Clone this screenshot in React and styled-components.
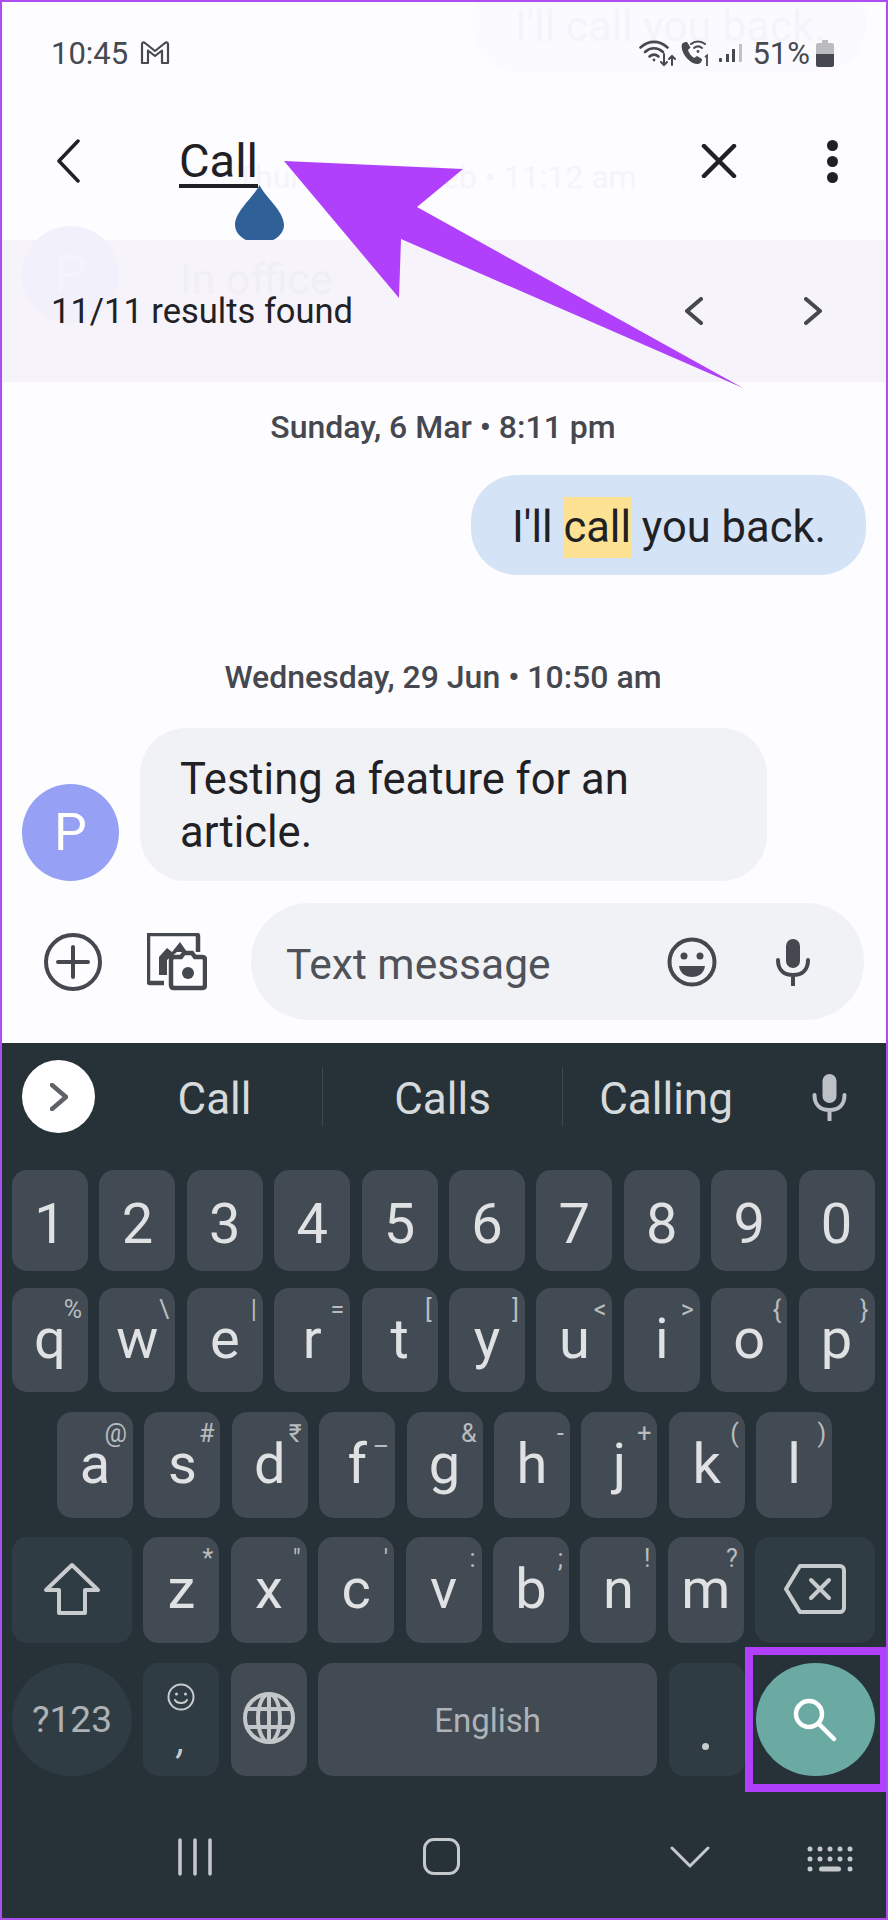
import React from 'react';
import styled, { createGlobalStyle } from 'styled-components';

const GlobalStyle = createGlobalStyle`
  html, body { margin: 0; padding: 0; background: #fdfcff; }
  * { box-sizing: border-box; }
`;

const row2 = [['q', '%'], ['w', '\\'], ['e', '|'], ['r', '='], ['t', '['], ['y', ']'], ['u', '<'], ['i', '>'], ['o', '{'], ['p', '}']];
const row3 = [['a', '@'], ['s', '#'], ['d', '₹'], ['f', '–', true], ['g', '&'], ['h', '-'], ['j', '+'], ['k', '('], ['l', ')']];
const row4 = [['z', '*'], ['x', '"'], ['c', "'"], ['v', ':'], ['b', ';'], ['n', '!'], ['m', '?']];

const WifiIcon = () => (
  <svg width="38" height="28" viewBox="0 0 38 28" fill="none" stroke="#46494f" strokeWidth="2.6" strokeLinecap="round">
    <path d="M1.5 8.5C10 1 20 1 28.5 8.5" />
    <path d="M6 13C11.5 8 18.5 8 24 13" />
    <path d="M10.5 17.5C13.5 15 16.5 15 19.5 17.5" />
    <circle cx="15" cy="21" r="1.4" fill="#46494f" stroke="none" />
    <path d="M25 15V26M22 23L25 26L28 23" strokeWidth="2" />
    <path d="M33 26V17M30 20L33 17L36 20" strokeWidth="2" />
  </svg>
);

const CallWifiIcon = () => (
  <svg width="31" height="28" viewBox="0 0 31 28" fill="none">
    <path d="M3 5C1 12 9 24 18 25C21 25 23 23 23 20L18 17L15 19C12 17 10 14 9 11L11.500 8.500L8 3C6 3 4 3.500 3 5Z" fill="#46494f" />
    <path d="M12 5C16 1.500 22 1.500 26 5M15 9C17.500 7 20.500 7 23 9" stroke="#46494f" strokeWidth="2" strokeLinecap="round" />
    <circle cx="19" cy="12.500" r="1.400" fill="#46494f" />
    <path d="M26 18L28 16.500V27" stroke="#46494f" strokeWidth="1.800" />
  </svg>
);

const SignalIcon = () => (
  <svg width="24" height="19" viewBox="0 0 24 19">
    <rect x="0" y="14" width="3" height="4" rx="1" fill="#46494f" />
    <rect x="7" y="10" width="3" height="8" fill="#46494f" />
    <rect x="13" y="5" width="3" height="13" fill="#46494f" />
    <rect x="20" y="0" width="3" height="18" fill="#bfc1c4" />
  </svg>
);

const BatteryIcon = () => (
  <svg width="18" height="27" viewBox="0 0 18 27">
    <path d="M6 0H12V3H16C17 3 18 4 18 5V14H0V5C0 4 1 3 2 3H6Z" fill="#b9bbbf" />
    <path d="M0 14H18V25C18 26 17 27 16 27H2C1 27 0 26 0 25Z" fill="#45484f" />
  </svg>
);

const GmailIcon = () => (
  <svg width="30" height="24" viewBox="0 0 30 24" fill="none" stroke="#46494f" strokeWidth="2.200" strokeLinejoin="round">
    <path d="M2 22V3C2 1.500 3.500 1 5 2L15 10L25 2C26.500 1 28 1.500 28 3V22H22V9.500L15 15L8 9.500V22Z" />
  </svg>
);

const Chevron = ({ dir = 'left', w = 22, h = 44, sw = 4, color = '#1f2125' }) => (
  <svg width={w} height={h} viewBox={`0 0 ${w} ${h}`} fill="none" stroke={color} strokeWidth={sw} strokeLinecap="round" strokeLinejoin="round">
    {dir === 'left'
      ? <path d={`M${w - 2} 2L2 ${h / 2}L${w - 2} ${h - 2}`} />
      : <path d={`M2 2L${w - 2} ${h / 2}L2 ${h - 2}`} />}
  </svg>
);

const CloseIcon = () => (
  <svg width="36" height="34" viewBox="0 0 36 34" stroke="#1f2125" strokeWidth="4.500" strokeLinecap="round">
    <path d="M3 2L33 32M33 2L3 32" />
  </svg>
);

const PlusIcon = () => (
  <svg width="58" height="58" viewBox="0 0 58 58" fill="none" stroke="#45484f" strokeWidth="4">
    <circle cx="29" cy="29" r="27" />
    <path d="M14 29H44M29 14V44" strokeLinecap="round" />
  </svg>
);

const GalleryIcon = () => (
  <svg width="60" height="58" viewBox="0 0 60 58" fill="none">
    <path d="M17 50H3C2 50 1 49 1 48V3C1 2 2 1 3 1H49C50 1 51 2 51 3V19" stroke="#45484f" strokeWidth="4.500" />
    <path d="M12 42V24L20 15L25 19L33 9L40 19H30L20 27V42Z" fill="#45484f" />
    <path d="M27 24H34L37 20H45L48 24H55C57 24 58 25 58 27V52C58 54 57 55 55 55H27C25 55 24 54 24 52V27C24 25 25 24 27 24Z" fill="#fdfcff" stroke="#45484f" strokeWidth="4.500" />
    <circle cx="41" cy="40" r="6" fill="#45484f" />
  </svg>
);

const SmileIcon = () => (
  <svg width="50" height="50" viewBox="0 0 50 50" fill="none">
    <circle cx="25" cy="25" r="22.500" stroke="#45484f" strokeWidth="4" />
    <circle cx="17" cy="19" r="3.500" fill="#45484f" />
    <circle cx="33" cy="19" r="3.500" fill="#45484f" />
    <path d="M12 29H38C37 36 32 40 25 40C18 40 13 36 12 29Z" fill="#45484f" />
  </svg>
);

const MicIcon = ({ color = '#45484f', w = 34, h = 48 }) => (
  <svg width={w} height={h} viewBox="0 0 34 48" fill="none">
    <rect x="10" y="1" width="14" height="29" rx="7" fill={color} />
    <path d="M2 22C2 32 8 37 17 37C26 37 32 32 32 22M17 37V47" stroke={color} strokeWidth="4" strokeLinecap="round" />
  </svg>
);

const ShiftIcon = () => (
  <svg width="58" height="54" viewBox="0 0 58 54" fill="none" stroke="#c9ccce" strokeWidth="4" strokeLinejoin="round">
    <path d="M29 3L55 28L44 28H42V51H16V28H3Z" />
  </svg>
);

const BackspaceIcon = () => (
  <svg width="62" height="50" viewBox="0 0 62 50" fill="none" stroke="#c9ccce" strokeWidth="4" strokeLinejoin="round">
    <path d="M16 2H56C58 2 60 4 60 6V44C60 46 58 48 56 48H16L2 25Z" />
    <path d="M27 16L45 34M45 16L27 34" strokeLinecap="round" />
  </svg>
);

const KeySmile = () => (
  <svg width="28" height="28" viewBox="0 0 28 28" fill="none" stroke="#c9ccce" strokeWidth="2">
    <circle cx="14" cy="14" r="12.500" />
    <circle cx="9.500" cy="11" r="1.500" fill="#c9ccce" stroke="none" />
    <circle cx="18.500" cy="11" r="1.500" fill="#c9ccce" stroke="none" />
    <path d="M8 17C10 21 18 21 20 17" strokeLinecap="round" />
  </svg>
);

const GlobeIcon = () => (
  <svg width="52" height="52" viewBox="0 0 52 52" fill="none" stroke="#c4c7c9" strokeWidth="4">
    <circle cx="26" cy="26" r="24" />
    <ellipse cx="26" cy="26" rx="11" ry="24" />
    <path d="M26 2V50M4 17H48M4 35H48" />
  </svg>
);

const SearchIcon = () => (
  <svg width="44" height="44" viewBox="0 0 44 44" fill="none" stroke="#ffffff" strokeWidth="4.500" strokeLinecap="round">
    <circle cx="16" cy="16" r="13" />
    <path d="M26 26L41 41" />
  </svg>
);

const NavLinesIcon = () => (
  <svg width="36" height="38" viewBox="0 0 36 38" stroke="#c6c9cb" strokeWidth="3.500" strokeLinecap="round">
    <path d="M3 2V36M18 2V36M33 2V36" />
  </svg>
);

const NavKeyboard = styled.svg`
  width: 46px;
  height: 26px;
  margin: 8px 0 0 97px;
`;

const NavKeyboardIcon = () => (
  <NavKeyboard viewBox="0 0 46 26" fill="#c6c9cb">
    {[0, 1].map((r) =>
      [0, 1, 2, 3, 4].map((c) => <circle key={`${r}-${c}`} cx={3 + c * 10} cy={3 + r * 10} r="2.500" />)
    )}
    <circle cx="3" cy="23" r="2.500" />
    <rect x="12" y="20.500" width="22" height="5" rx="2.500" />
    <circle cx="43" cy="23" r="2.500" />
  </NavKeyboard>
);

const App = () => (
  <Page>
    <GlobalStyle />
    <GhostBubble />
    <GhostText $x={513} $y={-1} $size={43}>I'll call you back.</GhostText>
    <GhostText $x={234} $y={156} $size={32}>Thursday, 24 Feb • 11:12 am</GhostText>

    <StatusBar>
      <StatusLeft>
        <Time>10:45</Time>
        <GmailIcon />
      </StatusLeft>
      <StatusRight>
        <WifiIcon />
        <CallWifiIcon />
        <SignalIcon />
        <Battery>51%</Battery>
        <BatteryIcon />
      </StatusRight>
    </StatusBar>

    <Header>
      <Chevron w={23} h={44} sw={3.5} />
      <SearchField>
        <Query>Call</Query>
        <Drop viewBox="0 0 49 58">
          <path d="M24.500 0C30 12 49 26 49 40C49 50 38 58 24.500 58C11 58 0 50 0 40C0 26 19 12 24.500 0Z" fill="#2f6098" />
        </Drop>
      </SearchField>
      <HeaderRight>
        <CloseIcon />
        <Dots><i /><i /><i /></Dots>
      </HeaderRight>
    </Header>

    <ResultsBand>
      <GhostAvatar>P</GhostAvatar>
      <GhostOffice>In office</GhostOffice>
      <Results>11/11 results found</Results>
      <ResultNav>
        <Chevron w={18} h={28} sw={4} color="#45484f" />
        <Chevron dir="right" w={18} h={28} sw={4} color="#45484f" />
      </ResultNav>
    </ResultsBand>

    <Thread>
      <DateLine>Sunday, 6 Mar • 8:11 pm</DateLine>
      <SentBubble>I'll <Hit>call</Hit> you back.</SentBubble>
      <DateLine $top={85}>Wednesday, 29 Jun • 10:50 am</DateLine>
      <ReceivedRow>
        <Avatar>P</Avatar>
        <ReceivedBubble>Testing a feature for an article.</ReceivedBubble>
      </ReceivedRow>
    </Thread>

    <Composer>
      <PlusIcon />
      <GalleryIcon />
      <InputPill>
        <Placeholder>Text message</Placeholder>
        <SmileIcon />
        <MicIcon />
      </InputPill>
    </Composer>

    <Keyboard>
      <Suggestions>
        <ExpandButton>
          <Chevron dir="right" w={18} h={28} sw={4.5} color="#5f6368" />
        </ExpandButton>
        <Suggestion $w={227} $shift={12}>Call</Suggestion>
        <Divider />
        <Suggestion $w={239}>Calls</Suggestion>
        <Divider />
        <Suggestion $w={206}>Calling</Suggestion>
        <SuggestMic><MicIcon color="#bdc1c6" w={35} h={48} /></SuggestMic>
      </Suggestions>

      <KeyRow $h={101} $top={37}>
        {['1', '2', '3', '4', '5', '6', '7', '8', '9', '0'].map((d) => <DigitKey key={d}>{d}</DigitKey>)}
      </KeyRow>
      <KeyRow $h={104} $top={17}>
        {row2.map(([l, s]) => <Key key={l}>{l}<Sup>{s}</Sup></Key>)}
      </KeyRow>
      <KeyRow $h={106} $top={20} $left={55}>
        {row3.map(([l, s, low]) => <Key key={l}>{l}<Sup $low={low}>{s}</Sup></Key>)}
      </KeyRow>
      <KeyRow $h={106} $top={19}>
        <Key $w={120} $dark><ShiftIcon /></Key>
        {row4.map(([l, s]) => <Key key={l}>{l}<Sup>{s}</Sup></Key>)}
        <Key $w={120} $dark><BackspaceIcon /></Key>
      </KeyRow>
      <KeyRow $h={113} $top={20}>
        <RoundKey $w={120} $bg="#303c44"><SymbolsLabel>?123</SymbolsLabel></RoundKey>
        <CommaKey $dark>
          <KeySmile />
          <Comma>,</Comma>
        </CommaKey>
        <Key><GlobeIcon /></Key>
        <Key $w={339}><SpaceLabel>English</SpaceLabel></Key>
        <Key $dark><PeriodDot /></Key>
        <RoundKey $w={119} $bg="#6ba9a3"><SearchIcon /></RoundKey>
      </KeyRow>

      <NavBar>
        <NavLinesIcon />
        <NavHome />
        <NavChevron viewBox="0 0 40 22" fill="none" stroke="#c6c9cb" strokeWidth="3" strokeLinecap="round" strokeLinejoin="round">
          <path d="M2 2L20 20L38 2" />
        </NavChevron>
        <NavKeyboardIcon />
      </NavBar>
    </Keyboard>

    <SearchHighlight />
    <CalloutArrow viewBox="0 0 888 400">
      <path d="M284 161L463 169L417 207L743 388L401 239L399 298Z" fill="#b040fb" />
    </CalloutArrow>
  </Page>
);

export default App;

const sans = `Roboto, "Noto Sans", sans-serif`;

const Page = styled.div`
  position: relative;
  width: 888px;
  height: 1920px;
  overflow: hidden;
  display: flex;
  flex-direction: column;
  border: 2px solid #ad4ff0;
  background: #fdfcff;
  font-family: ${sans};
`;

const GhostBubble = styled.div`
  position: absolute;
  left: 471px;
  top: -30px;
  width: 393px;
  height: 100px;
  border-radius: 46px;
  background: #fbfaff;
`;

const GhostText = styled.div`
  position: absolute;
  left: ${(p) => p.$x}px;
  top: ${(p) => p.$y}px;
  font-size: ${(p) => p.$size}px;
  color: #f6f4fa;
  white-space: nowrap;
`;

const StatusBar = styled.div`
  position: relative;
  height: 102px;
  flex: none;
  display: flex;
  align-items: center;
  justify-content: space-between;
  padding: 0 52px 0 49px;
  color: #46494f;
`;

const StatusLeft = styled.div`
  display: flex;
  align-items: center;
  gap: 12px;
`;

const Time = styled.span`
  font-size: 31px;
`;

const StatusRight = styled.div`
  display: flex;
  align-items: center;
  gap: 4px;
  svg:nth-child(2) { margin-left: -2px; }
  svg:nth-child(3) { margin-left: 5px; }
`;

const Battery = styled.span`
  font-size: 31px;
  margin: 0 2px 0 5px;
`;

const Header = styled.div`
  position: relative;
  height: 114px;
  flex: none;
  display: flex;
  align-items: center;
  padding: 0 48px 0 55px;
`;

const SearchField = styled.div`
  position: relative;
  margin-left: 99px;
  flex: 1;
  padding-top: 2px;
`;

const Query = styled.span`
  display: inline-block;
  font-size: 47px;
  line-height: 47px;
  color: #1f2125;
  border-bottom: 4px solid #1f2125;
`;

const Drop = styled.svg`
  position: absolute;
  left: 56px;
  top: 50px;
  width: 49px;
  height: 58px;
`;

const HeaderRight = styled.div`
  display: flex;
  align-items: center;
  gap: 90px;
`;

const Dots = styled.div`
  display: flex;
  flex-direction: column;
  gap: 5px;
  i {
    display: block;
    width: 11px;
    height: 11px;
    border-radius: 50%;
    background: #1f2125;
  }
`;

const ResultsBand = styled.div`
  position: relative;
  height: 142px;
  margin-top: 22px;
  flex: none;
  display: flex;
  align-items: center;
  justify-content: space-between;
  padding: 0 64px 0 49px;
  background: #f6f3fb;
`;

const GhostAvatar = styled.div`
  position: absolute;
  left: 20px;
  top: -14px;
  width: 97px;
  height: 97px;
  border-radius: 50%;
  background: #f2f0fa;
  color: #f6f3fb;
  font-size: 52px;
  display: flex;
  align-items: center;
  justify-content: center;
`;

const GhostOffice = styled.div`
  position: absolute;
  left: 178px;
  top: 14px;
  font-size: 43px;
  color: #f1eff6;
`;

const Results = styled.div`
  position: relative;
  font-size: 34.500px;
  color: #1f2125;
`;

const ResultNav = styled.div`
  position: relative;
  display: flex;
  gap: 101px;
`;

const Thread = styled.div`
  flex: none;
  display: flex;
  flex-direction: column;
  padding: 28px 20px 0;
`;

const DateLine = styled.div`
  margin-top: ${(p) => p.$top || 0}px;
  text-align: center;
  font-size: 32px;
  line-height: 34px;
  font-weight: 500;
  color: #46484f;
  padding-right: 2px;
`;

const SentBubble = styled.div`
  align-self: flex-end;
  margin: 31px 0 0 0;
  height: 100px;
  padding: 4px 40px 0 41px;
  border-radius: 46px;
  background: #d5e3f7;
  font-size: 43.500px;
  line-height: 97px;
  color: #1f2125;
  white-space: pre;
`;

const Hit = styled.span`
  display: inline-block;
  line-height: 61px;
  background: #fde293;
`;

const ReceivedRow = styled.div`
  display: flex;
  align-items: flex-end;
  gap: 21px;
  margin-top: 34px;
`;

const Avatar = styled.div`
  width: 97px;
  height: 97px;
  border-radius: 50%;
  background: #96a0f5;
  color: #ffffff;
  font-size: 52px;
  display: flex;
  align-items: center;
  justify-content: center;
`;

const ReceivedBubble = styled.div`
  width: 627px;
  height: 153px;
  padding: 25px 120px 0 40px;
  border-radius: 46px;
  background: #f1f2f6;
  font-size: 43.500px;
  line-height: 53px;
  color: #1f2125;
`;

const Composer = styled.div`
  flex: none;
  display: flex;
  align-items: center;
  gap: 45px;
  margin-top: 22px;
  height: 117px;
  padding: 0 22px 0 42px;
`;

const InputPill = styled.div`
  flex: 1;
  height: 117px;
  margin-left: -1px;
  display: flex;
  align-items: center;
  padding: 0 54px 0 35px;
  border-radius: 58px;
  background: #f1f2f6;
  svg:last-child { margin-left: 59px; }
`;

const Placeholder = styled.div`
  flex: 1;
  padding-top: 6px;
  font-size: 42.500px;
  color: #4f5259;
`;

const Keyboard = styled.div`
  flex: 1;
  margin-top: 23px;
  display: flex;
  flex-direction: column;
  background: #263238;
  padding-top: 17px;
`;

const Suggestions = styled.div`
  height: 73px;
  flex: none;
  display: flex;
  align-items: center;
  padding-left: 20px;
`;

const ExpandButton = styled.div`
  width: 73px;
  height: 73px;
  flex: none;
  border-radius: 50%;
  background: #ffffff;
  display: flex;
  align-items: center;
  justify-content: center;
`;

const Suggestion = styled.div`
  width: ${(p) => p.$w}px;
  flex: none;
  padding: 4px 0 0 ${(p) => p.$shift || 0}px;
  text-align: center;
  font-size: 44px;
  color: #d7dadc;
`;

const Divider = styled.div`
  width: 1px;
  height: 59px;
  flex: none;
  background: #3c474e;
`;

const SuggestMic = styled.div`
  margin-left: 43px;
  display: flex;
`;

const KeyRow = styled.div`
  flex: none;
  display: flex;
  gap: 11.4px;
  height: ${(p) => p.$h}px;
  margin-top: ${(p) => p.$top}px;
  padding-left: ${(p) => p.$left || 10}px;
`;

const Key = styled.div`
  position: relative;
  flex: none;
  width: ${(p) => p.$w || 76}px;
  display: flex;
  align-items: center;
  justify-content: center;
  padding-bottom: 3px;
  border-radius: 15px;
  background: ${(p) => (p.$dark ? '#303c44' : '#424b53')};
  color: #dfe1e3;
  font-size: 56px;
  line-height: 1;
`;

const DigitKey = styled(Key)`
  padding: 6px 0 0;
`;

const CommaKey = styled(Key)`
  flex-direction: column;
  justify-content: flex-start;
  padding-top: 20px;
`;

const Comma = styled.span`
  font-size: 38px;
  color: #c9ccce;
  margin-top: 10px;
  font-style: italic;
`;

const RoundKey = styled.div`
  flex: none;
  width: ${(p) => p.$w}px;
  border-radius: 50%;
  background: ${(p) => p.$bg};
  display: flex;
  align-items: center;
  justify-content: center;
`;

const Sup = styled.span`
  position: absolute;
  right: 6px;
  top: ${(p) => (p.$low ? 22 : 9)}px;
  font-size: 25px;
  color: #b8bcbf;
`;

const SymbolsLabel = styled.span`
  font-size: 37px;
  color: #aeb2b5;
`;

const SpaceLabel = styled.span`
  padding-top: 4px;
  font-size: 33px;
  color: #aeb3b7;
`;

const PeriodDot = styled.div`
  width: 7px;
  height: 7px;
  margin: 56px 3px 0 0;
  border-radius: 50%;
  background: #c9ccce;
`;

const NavBar = styled.div`
  flex: 1;
  display: flex;
  align-items: flex-start;
  padding: 62px 0 0 175px;
`;

const NavHome = styled.div`
  width: 37px;
  height: 37px;
  margin-left: 210px;
  border: 3.500px solid #c6c9cb;
  border-radius: 11px;
`;

const NavChevron = styled.svg`
  width: 40px;
  height: 22px;
  margin: 8px 0 0 210px;
`;

const SearchHighlight = styled.div`
  position: absolute;
  left: 743px;
  top: 1645px;
  width: 143px;
  height: 145px;
  border: 8px solid #b040fb;
`;

const CalloutArrow = styled.svg`
  position: absolute;
  left: -2px;
  top: -2px;
  width: 888px;
  height: 400px;
`;
